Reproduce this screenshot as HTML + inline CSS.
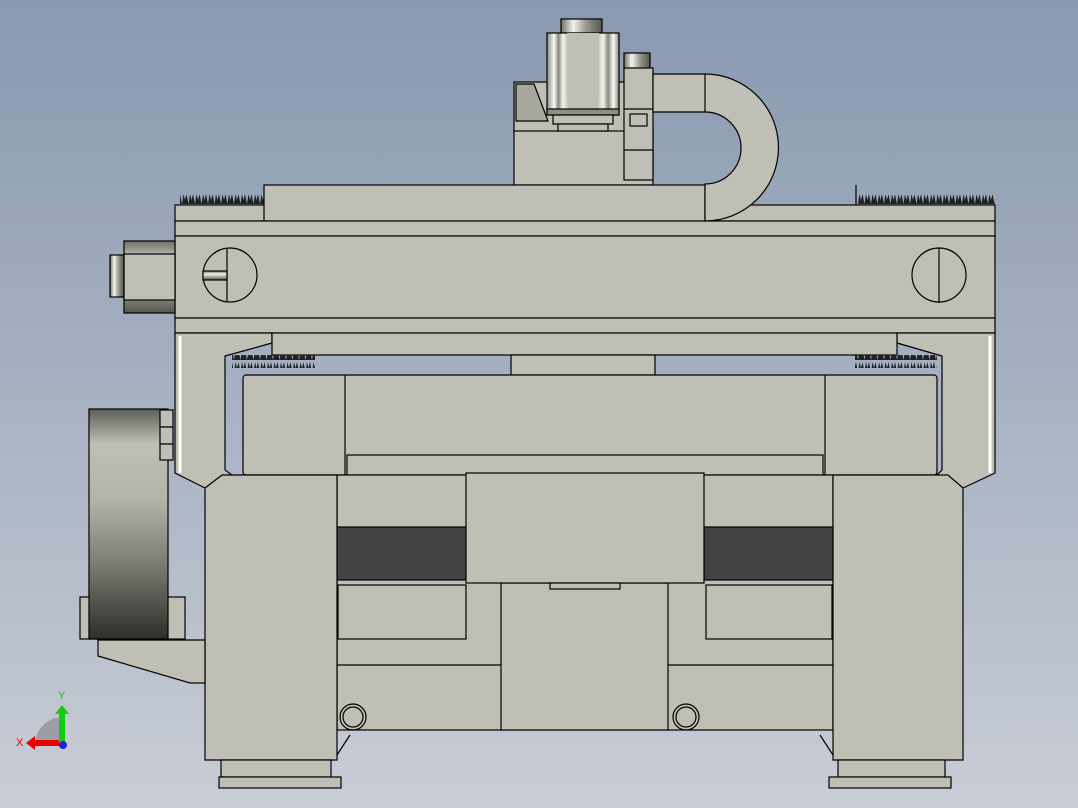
<!DOCTYPE html>
<html><head><meta charset="utf-8"><style>
html,body{margin:0;padding:0;width:1078px;height:808px;overflow:hidden}
body{background:linear-gradient(#8999b0,#a7b2c3 50%,#c9cdd5)}
svg{position:absolute;left:0;top:0}
</style></head><body>
<svg width="1078" height="808" viewBox="0 0 1078 808" xmlns="http://www.w3.org/2000/svg">
<defs>
<linearGradient id="cyl" x1="0" x2="1"><stop offset="0" stop-color="#6f6f66"/><stop offset=".3" stop-color="#f4f4ee"/><stop offset=".6" stop-color="#9a9a90"/><stop offset="1" stop-color="#55554d"/></linearGradient>
<linearGradient id="mot" x1="0" x2="1"><stop offset="0" stop-color="#8a8a82"/><stop offset=".1" stop-color="#fafaf5"/><stop offset=".16" stop-color="#88887f"/><stop offset=".22" stop-color="#f5f5f0"/><stop offset=".3" stop-color="#bfbfb6"/><stop offset=".7" stop-color="#bfbfb6"/><stop offset=".78" stop-color="#f5f5f0"/><stop offset=".85" stop-color="#88887f"/><stop offset=".92" stop-color="#fafaf5"/><stop offset="1" stop-color="#8a8a82"/></linearGradient>
<linearGradient id="cylv" x1="0" y1="0" x2="0" y2="1"><stop offset="0" stop-color="#6f6f66"/><stop offset=".35" stop-color="#f0f0ea"/><stop offset=".7" stop-color="#9a9a90"/><stop offset="1" stop-color="#55554d"/></linearGradient>
<linearGradient id="wheel" x1="0" y1="0" x2="0" y2="1"><stop offset="0" stop-color="#5e5e58"/><stop offset=".15" stop-color="#bfbfb5"/><stop offset=".4" stop-color="#b3b3a8"/><stop offset=".7" stop-color="#76766e"/><stop offset="1" stop-color="#2e2e2a"/></linearGradient>
<pattern id="teeth" width="6.5" height="12" patternUnits="userSpaceOnUse"><path d="M0,12 L1.5,2 L3,8 L4.5,2 L6.5,12Z" fill="#222"/></pattern>
</defs>
<g stroke="#000" stroke-width="1.2" fill="#bfbfb6">
<!-- top motor assembly -->
<rect x="514" y="82" width="112" height="50"/>
<path d="M516,84 L534,84 L548,121 L516,121Z" fill="#a8a89f"/>
<rect x="514" y="131" width="139" height="54"/>
<rect x="561" y="19" width="41" height="14" fill="url(#cyl)"/>
<rect x="547" y="33" width="72" height="82" fill="url(#mot)"/>
<rect x="567" y="33" width="32" height="66" stroke="none"/>
<rect x="547" y="109" width="72" height="6" fill="#8e8e86"/>
<rect x="553" y="115" width="60" height="9"/>
<rect x="558" y="124" width="50" height="7"/>
<rect x="624" y="53" width="26" height="16" fill="url(#cyl)"/>
<rect x="624" y="68" width="29" height="112"/>
<line x1="624" y1="109" x2="653" y2="109"/>
<line x1="624" y1="150" x2="653" y2="150"/>
<rect x="630" y="114" width="17" height="12" fill="none"/>
<!-- rack teeth -->
<rect x="180" y="195" width="84" height="10" fill="url(#teeth)" stroke="none"/>
<rect x="858" y="195" width="137" height="10" fill="url(#teeth)" stroke="none"/>
<line x1="856" y1="185" x2="856" y2="205"/>
<!-- gantry -->
<rect x="175" y="205" width="820" height="16"/>
<rect x="264" y="185" width="441" height="36"/>
<rect x="175" y="221" width="820" height="15"/>
<rect x="175" y="236" width="820" height="82"/>
<rect x="175" y="318" width="820" height="15"/>
<!-- hose -->
<path d="M653,74 L705,74 A73,73 0 0 1 705,221 L705,184 A36,36 0 0 0 705,112 L653,112Z"/>
<line x1="705" y1="74" x2="705" y2="112"/>
<circle cx="230" cy="275" r="27" fill="none"/>
<line x1="227" y1="249" x2="227" y2="302"/>
<rect x="203" y="271" width="24" height="9" fill="url(#cylv)"/>
<circle cx="939" cy="275" r="27" fill="none"/>
<line x1="939" y1="248" x2="939" y2="303"/>
<!-- left motor -->
<rect x="124" y="241" width="51" height="72" fill="url(#cylv)"/>
<rect x="124" y="254" width="51" height="46"/>
<rect x="110" y="255" width="14" height="42" fill="url(#cyl)"/>
<!-- legs -->
<path d="M175,333 L272,333 L272,343 L225,356 L225,470 L232,475 L205,488 L175,473Z"/>
<path d="M995,333 L897,333 L897,343 L942,356 L942,470 L937,475 L963,488 L995,473Z"/>
<line x1="180" y1="336" x2="180" y2="473" stroke="#fff" stroke-width="3"/>
<line x1="990" y1="336" x2="990" y2="473" stroke="#fff" stroke-width="3"/>
<rect x="272" y="333" width="625" height="22"/>
<rect x="232" y="355" width="83" height="13" fill="url(#teeth)" stroke="none"/>
<rect x="855" y="355" width="82" height="13" fill="url(#teeth)" stroke="none"/>
<rect x="511" y="355" width="144" height="20"/>
<!-- body -->
<rect x="243" y="375" width="694" height="100" rx="3"/>
<line x1="345" y1="375" x2="345" y2="475"/>
<line x1="825" y1="375" x2="825" y2="475"/>
<rect x="347" y="455" width="476" height="20"/>
<rect x="337" y="475" width="496" height="255"/>
<rect x="337" y="527" width="129" height="53" fill="#434343"/>
<rect x="704" y="527" width="129" height="53" fill="#434343"/>
<rect x="338" y="585" width="128" height="54"/>
<rect x="706" y="585" width="126" height="54"/>
<line x1="337" y1="665" x2="833" y2="665"/>
<rect x="501" y="583" width="167" height="147"/>
<rect x="466" y="473" width="238" height="110"/>
<rect x="550" y="583" width="70" height="6"/>
<circle cx="353" cy="717" r="13" fill="none"/><circle cx="353" cy="717" r="10" fill="none"/>
<circle cx="686" cy="717" r="13" fill="none"/><circle cx="686" cy="717" r="10" fill="none"/>
<!-- columns -->
<path d="M205,488 L222,475 L337,475 L337,760 L205,760Z"/>
<path d="M963,488 L948,475 L833,475 L833,760 L963,760Z"/>
<path d="M337,755 L350,735" fill="none"/>
<path d="M833,755 L820,735" fill="none"/>
<rect x="221" y="760" width="110" height="17"/>
<rect x="219" y="777" width="122" height="11"/>
<rect x="838" y="760" width="107" height="17"/>
<rect x="829" y="777" width="122" height="11"/>
<!-- belt wheel -->
<path d="M98,640 L205,640 L205,683 L190,683 L98,656Z"/>
<rect x="80" y="597" width="105" height="42"/>
<rect x="89" y="409" width="79" height="230" fill="url(#wheel)"/>
<rect x="160" y="410" width="13" height="17"/>
<rect x="160" y="427" width="13" height="17"/>
<rect x="160" y="444" width="13" height="16"/>
</g>
<!-- axis triad -->
<path d="M35,745 A28,28 0 0 1 62,717 L62,745Z" fill="#9a9ea5"/>
<rect x="33" y="740" width="30" height="6" fill="#e00"/>
<path d="M26,743 L35,736 L35,750Z" fill="#e00"/>
<rect x="59" y="712" width="6" height="32" fill="#1c1"/>
<path d="M55,714 L62,705 L69,714Z" fill="#1c1"/>
<circle cx="63" cy="745" r="4" fill="#22d"/>
<text x="16" y="746" font-family="Liberation Sans, sans-serif" font-size="11" fill="#e00">X</text>
<text x="58" y="699" font-family="Liberation Sans, sans-serif" font-size="11" fill="#1c1">Y</text>
</svg>
</body></html>
